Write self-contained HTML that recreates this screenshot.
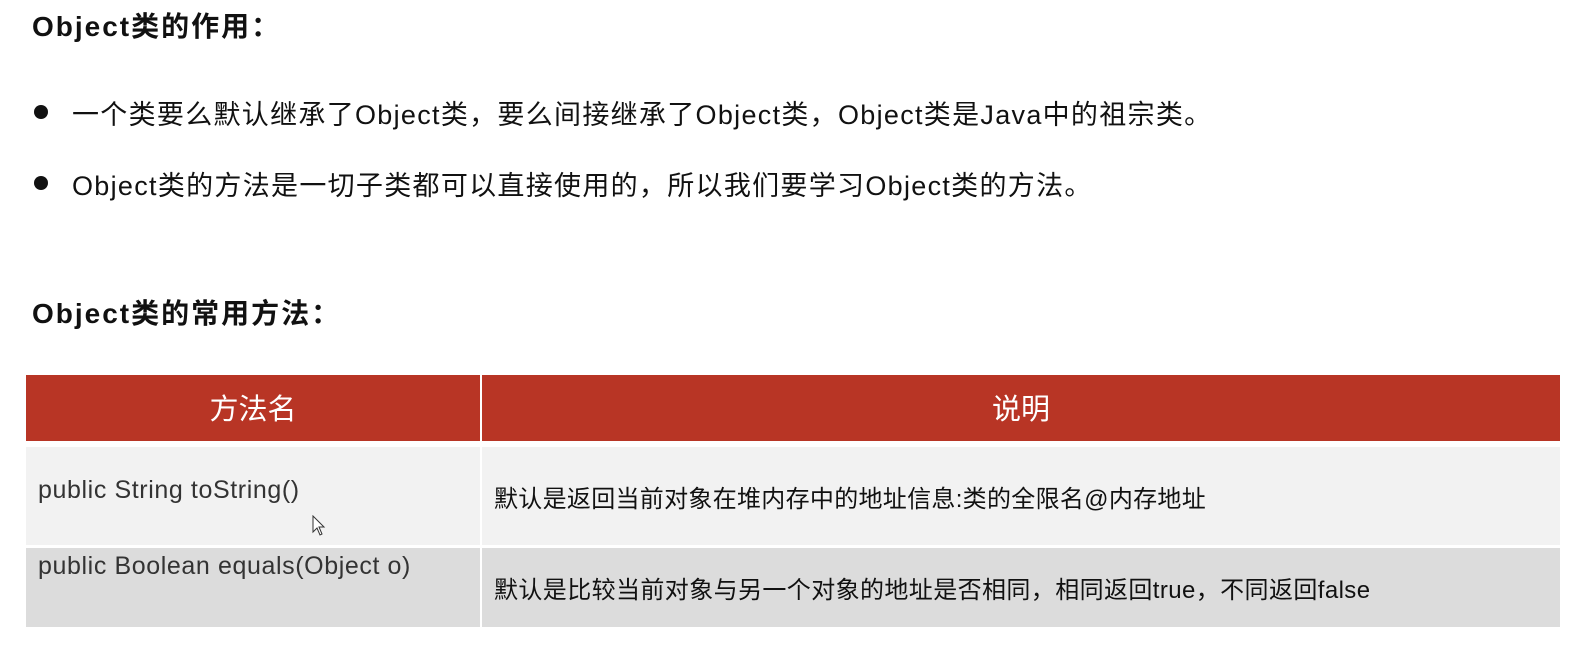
<!DOCTYPE html>
<html><head><meta charset="utf-8"><style>
body{margin:0;width:1586px;height:650px;background:#fff;position:relative;overflow:hidden;font-family:"Liberation Sans","Noto Sans CJK SC",sans-serif;color:#111}
.a{position:absolute;white-space:nowrap}
.dot{position:absolute;width:14px;height:14px;border-radius:50%;background:#111}
</style></head><body>
<div class="a" style="left:32px;top:5px;font-size:28px;font-weight:bold;letter-spacing:2px">Object类的作用：</div>
<div class="dot" style="left:34px;top:105px"></div>
<div class="a" style="left:72px;top:93px;font-size:27px;letter-spacing:1.3px">一个类要么默认继承了Object类，要么间接继承了Object类，Object类是Java中的祖宗类。</div>
<div class="dot" style="left:34px;top:176px"></div>
<div class="a" style="left:72px;top:164px;font-size:27px;letter-spacing:1.3px">Object类的方法是一切子类都可以直接使用的，所以我们要学习Object类的方法。</div>
<div class="a" style="left:32px;top:292px;font-size:28px;font-weight:bold;letter-spacing:2px">Object类的常用方法：</div>
<div class="a" style="left:26px;top:375px;width:454px;height:66px;background:#b83525;color:#fff;font-size:29px;text-align:center;line-height:70px">方法名</div>
<div class="a" style="left:482px;top:375px;width:1078px;height:66px;background:#b83525;color:#fff;font-size:29px;text-align:center;line-height:70px">说明</div>
<div class="a" style="left:26px;top:447px;width:454px;height:98px;background:#f2f2f2"></div>
<div class="a" style="left:482px;top:447px;width:1078px;height:98px;background:#f2f2f2"></div>
<div class="a" style="left:26px;top:548px;width:454px;height:79px;background:#dcdcdc"></div>
<div class="a" style="left:482px;top:548px;width:1078px;height:79px;background:#dcdcdc"></div>
<div class="a" style="left:38px;top:476px;font-size:25px;letter-spacing:0.6px;color:#333">public String toString()</div>
<div class="a" style="left:38px;top:552px;font-size:25px;letter-spacing:0.6px;color:#333">public Boolean equals(Object o)</div>
<div class="a" style="left:494px;top:479px;font-size:24px;color:#111;letter-spacing:0.3px">默认是返回当前对象在堆内存中的地址信息:类的全限名@内存地址</div>
<div class="a" style="left:494px;top:570px;font-size:24px;color:#111;letter-spacing:0.4px">默认是比较当前对象与另一个对象的地址是否相同，相同返回true，不同返回false</div>
<svg class="a" style="left:312px;top:515px" width="14" height="22"><path d="M1 1 L1 17 L5 13 L8 20 L10 19 L7 12 L12 12 Z" fill="#fff" stroke="#333" stroke-width="1"/></svg>
</body></html>
